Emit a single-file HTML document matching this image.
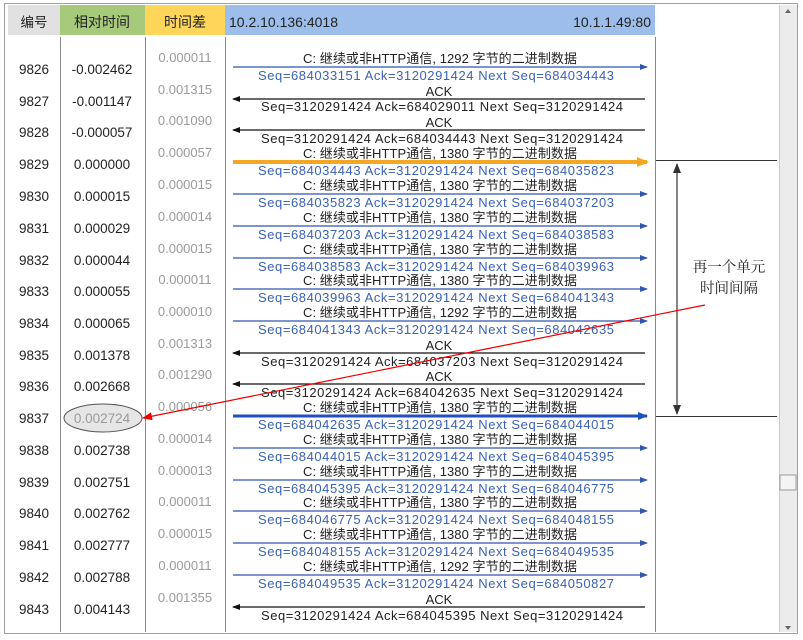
<!DOCTYPE html>
<html><head><meta charset="utf-8"><style>
html,body{margin:0;padding:0;background:#fff;width:803px;height:640px;overflow:hidden}
svg{display:block;font-family:"Liberation Sans","Noto Sans CJK SC",sans-serif}
.n{font-size:13.5px;fill:#222;text-anchor:middle}
.d{font-size:13px;fill:#9a9a9a;text-anchor:middle}
.l{font-size:13px;fill:#222;text-anchor:middle}
.b{font-size:13px;fill:#3a62b8;text-anchor:middle}
.k{font-size:13px;fill:#222;text-anchor:middle}
</style></head><body>
<svg width="803" height="640" viewBox="0 0 803 640">
<defs>
<marker id="ar" markerWidth="8" markerHeight="6" refX="7" refY="3" orient="auto" markerUnits="userSpaceOnUse"><path d="M0,0L8,3L0,6z" fill="#2f56b0"/></marker>
<marker id="al" markerWidth="8" markerHeight="6" refX="7" refY="3" orient="auto" markerUnits="userSpaceOnUse"><path d="M0,0L8,3L0,6z" fill="#111"/></marker>
<marker id="ao" markerWidth="12" markerHeight="10" refX="10" refY="5" orient="auto" markerUnits="userSpaceOnUse"><path d="M0,0L12,5L0,10z" fill="#f5a623"/></marker>
<marker id="ab" markerWidth="10" markerHeight="8" refX="9" refY="4" orient="auto" markerUnits="userSpaceOnUse"><path d="M0,0L10,4L0,8z" fill="#1f4fc0"/></marker>
<marker id="ak" markerWidth="10" markerHeight="8" refX="9" refY="4" orient="auto" markerUnits="userSpaceOnUse"><path d="M0,0L10,4L0,8z" fill="#333"/></marker>
<marker id="ared" markerWidth="10" markerHeight="8" refX="9" refY="4" orient="auto" markerUnits="userSpaceOnUse"><path d="M0,0L10,4L0,8z" fill="#e00"/></marker>
</defs>
<rect x="4.5" y="3.5" width="793" height="630" fill="#fff" stroke="#a0a0a0"/>
<rect x="8" y="5" width="52" height="30" fill="#e1e1e1"/>
<rect x="60" y="5" width="85" height="30" fill="#a6c97b"/>
<rect x="145" y="5" width="80" height="30" fill="#ffd65a"/>
<rect x="225" y="5" width="430" height="30" fill="#9dbeea"/>
<text x="34" y="27" class="n" font-size="14">编号</text>
<text x="102" y="27" class="n" style="font-size:14px">相对时间</text>
<text x="185" y="27" class="n" style="font-size:14px">时间差</text>
<text x="229" y="27" font-size="14" fill="#222">10.2.10.136:4018</text>
<text x="651" y="27" font-size="14" fill="#222" text-anchor="end">10.1.1.49:80</text>
<g stroke="#888" stroke-width="1">
<line x1="60.5" y1="37" x2="60.5" y2="632"/>
<line x1="145.5" y1="37" x2="145.5" y2="632"/>
<line x1="225.5" y1="37" x2="225.5" y2="632"/>
<line x1="655.5" y1="37" x2="655.5" y2="632"/>
</g>
<rect x="779" y="5" width="18" height="627" fill="#ececec"/>
<line x1="779.5" y1="5" x2="779.5" y2="632" stroke="#ccc"/>
<path d="M785,13L788,9L791,13z" fill="#666"/>
<rect x="780" y="475" width="16" height="15" fill="#f4f4f4" stroke="#9a9a9a"/>
<path d="M785,626L788,630L791,626z" fill="#666"/>

<g class="n">
<text x="34" y="74">9826</text><text x="102" y="74">-0.002462</text>
<text x="34" y="106">9827</text><text x="102" y="106">-0.001147</text>
<text x="34" y="137">9828</text><text x="102" y="137">-0.000057</text>
<text x="34" y="169">9829</text><text x="102" y="169">0.000000</text>
<text x="34" y="201">9830</text><text x="102" y="201">0.000015</text>
<text x="34" y="233">9831</text><text x="102" y="233">0.000029</text>
<text x="34" y="265">9832</text><text x="102" y="265">0.000044</text>
<text x="34" y="296">9833</text><text x="102" y="296">0.000055</text>
<text x="34" y="328">9834</text><text x="102" y="328">0.000065</text>
<text x="34" y="360">9835</text><text x="102" y="360">0.001378</text>
<text x="34" y="391">9836</text><text x="102" y="391">0.002668</text>
<text x="34" y="423">9837</text>
<text x="34" y="455">9838</text><text x="102" y="455">0.002738</text>
<text x="34" y="487">9839</text><text x="102" y="487">0.002751</text>
<text x="34" y="518">9840</text><text x="102" y="518">0.002762</text>
<text x="34" y="550">9841</text><text x="102" y="550">0.002777</text>
<text x="34" y="582">9842</text><text x="102" y="582">0.002788</text>
<text x="34" y="614">9843</text><text x="102" y="614">0.004143</text>
</g>
<ellipse cx="103" cy="418" rx="39" ry="14" fill="#e6e6e6" stroke="#555"/>
<text x="102" y="423" class="d" style="font-size:13.5px">0.002724</text>
<g class="d">
<text x="185" y="62">0.000011</text>
<text x="185" y="94">0.001315</text>
<text x="185" y="125">0.001090</text>
<text x="185" y="157">0.000057</text>
<text x="185" y="189">0.000015</text>
<text x="185" y="221">0.000014</text>
<text x="185" y="253">0.000015</text>
<text x="185" y="284">0.000011</text>
<text x="185" y="316">0.000010</text>
<text x="185" y="348">0.001313</text>
<text x="185" y="379">0.001290</text>
<text x="185" y="411">0.000056</text>
<text x="185" y="443">0.000014</text>
<text x="185" y="475">0.000013</text>
<text x="185" y="506">0.000011</text>
<text x="185" y="538">0.000015</text>
<text x="185" y="570">0.000011</text>
<text x="185" y="602">0.001355</text>
</g>

<g stroke-width="1.2" fill="none">
<line x1="233" y1="67" x2="647" y2="67" stroke="#2f56b0" marker-end="url(#ar)"/>
<line x1="645" y1="99" x2="233" y2="99" stroke="#111" marker-end="url(#al)"/>
<line x1="645" y1="130" x2="233" y2="130" stroke="#111" marker-end="url(#al)"/>
<line x1="233" y1="162" x2="647" y2="162" stroke="#f5a623" stroke-width="4" marker-end="url(#ao)"/>
<line x1="233" y1="194" x2="647" y2="194" stroke="#2f56b0" marker-end="url(#ar)"/>
<line x1="233" y1="226" x2="647" y2="226" stroke="#2f56b0" marker-end="url(#ar)"/>
<line x1="233" y1="258" x2="647" y2="258" stroke="#2f56b0" marker-end="url(#ar)"/>
<line x1="233" y1="289" x2="647" y2="289" stroke="#2f56b0" marker-end="url(#ar)"/>
<line x1="233" y1="321" x2="647" y2="321" stroke="#2f56b0" marker-end="url(#ar)"/>
<line x1="645" y1="353" x2="233" y2="353" stroke="#111" marker-end="url(#al)"/>
<line x1="645" y1="384" x2="233" y2="384" stroke="#111" marker-end="url(#al)"/>
<line x1="233" y1="416" x2="647" y2="416" stroke="#1f4fc0" stroke-width="3" marker-end="url(#ab)"/>
<line x1="233" y1="448" x2="647" y2="448" stroke="#2f56b0" marker-end="url(#ar)"/>
<line x1="233" y1="480" x2="647" y2="480" stroke="#2f56b0" marker-end="url(#ar)"/>
<line x1="233" y1="511" x2="647" y2="511" stroke="#2f56b0" marker-end="url(#ar)"/>
<line x1="233" y1="543" x2="647" y2="543" stroke="#2f56b0" marker-end="url(#ar)"/>
<line x1="233" y1="575" x2="647" y2="575" stroke="#2f56b0" marker-end="url(#ar)"/>
<line x1="645" y1="607" x2="233" y2="607" stroke="#111" marker-end="url(#al)"/>
</g>

<g class="l">
<text x="440" y="63" textLength="274">C: 继续或非HTTP通信, 1292 字节的二进制数据</text>
<text x="440" y="158" textLength="274">C: 继续或非HTTP通信, 1380 字节的二进制数据</text>
<text x="440" y="190" textLength="274">C: 继续或非HTTP通信, 1380 字节的二进制数据</text>
<text x="440" y="222" textLength="274">C: 继续或非HTTP通信, 1380 字节的二进制数据</text>
<text x="440" y="254" textLength="274">C: 继续或非HTTP通信, 1380 字节的二进制数据</text>
<text x="440" y="285" textLength="274">C: 继续或非HTTP通信, 1380 字节的二进制数据</text>
<text x="440" y="317" textLength="274">C: 继续或非HTTP通信, 1292 字节的二进制数据</text>
<text x="440" y="412" textLength="274">C: 继续或非HTTP通信, 1380 字节的二进制数据</text>
<text x="440" y="444" textLength="274">C: 继续或非HTTP通信, 1380 字节的二进制数据</text>
<text x="440" y="476" textLength="274">C: 继续或非HTTP通信, 1380 字节的二进制数据</text>
<text x="440" y="507" textLength="274">C: 继续或非HTTP通信, 1380 字节的二进制数据</text>
<text x="440" y="539" textLength="274">C: 继续或非HTTP通信, 1380 字节的二进制数据</text>
<text x="440" y="571" textLength="274">C: 继续或非HTTP通信, 1292 字节的二进制数据</text>
<text x="439" y="96">ACK</text>
<text x="439" y="127">ACK</text>
<text x="439" y="350">ACK</text>
<text x="439" y="381">ACK</text>
<text x="439" y="604">ACK</text>
</g>
<g class="b">
<text x="436" y="80" textLength="356">Seq=684033151  Ack=3120291424  Next Seq=684034443</text>
<text x="436" y="175" textLength="356">Seq=684034443  Ack=3120291424  Next Seq=684035823</text>
<text x="436" y="207" textLength="356">Seq=684035823  Ack=3120291424  Next Seq=684037203</text>
<text x="436" y="239" textLength="356">Seq=684037203  Ack=3120291424  Next Seq=684038583</text>
<text x="436" y="271" textLength="356">Seq=684038583  Ack=3120291424  Next Seq=684039963</text>
<text x="436" y="302" textLength="356">Seq=684039963  Ack=3120291424  Next Seq=684041343</text>
<text x="436" y="334" textLength="356">Seq=684041343  Ack=3120291424  Next Seq=684042635</text>
<text x="436" y="429" textLength="356">Seq=684042635  Ack=3120291424  Next Seq=684044015</text>
<text x="436" y="461" textLength="356">Seq=684044015  Ack=3120291424  Next Seq=684045395</text>
<text x="436" y="493" textLength="356">Seq=684045395  Ack=3120291424  Next Seq=684046775</text>
<text x="436" y="524" textLength="356">Seq=684046775  Ack=3120291424  Next Seq=684048155</text>
<text x="436" y="556" textLength="356">Seq=684048155  Ack=3120291424  Next Seq=684049535</text>
<text x="436" y="588" textLength="356">Seq=684049535  Ack=3120291424  Next Seq=684050827</text>
</g>
<g class="k">
<text x="442" y="111" textLength="362">Seq=3120291424  Ack=684029011  Next Seq=3120291424</text>
<text x="442" y="143" textLength="362">Seq=3120291424  Ack=684034443  Next Seq=3120291424</text>
<text x="442" y="366" textLength="362">Seq=3120291424  Ack=684037203  Next Seq=3120291424</text>
<text x="442" y="397" textLength="362">Seq=3120291424  Ack=684042635  Next Seq=3120291424</text>
<text x="442" y="620" textLength="362">Seq=3120291424  Ack=684045395  Next Seq=3120291424</text>
</g>

<line x1="656" y1="160.5" x2="777" y2="160.5" stroke="#333"/>
<line x1="656" y1="416.5" x2="777" y2="416.5" stroke="#333"/>
<line x1="677" y1="300" x2="677" y2="164" stroke="#333" stroke-width="1.2" marker-end="url(#ak)"/>
<line x1="677" y1="300" x2="677" y2="414" stroke="#333" stroke-width="1.2" marker-end="url(#ak)"/>
<text x="729" y="272" font-size="14.5" fill="#222" text-anchor="middle" style="font-family:'Noto Serif CJK SC',serif">再一个单元</text>
<text x="729" y="293" font-size="14.5" fill="#222" text-anchor="middle" style="font-family:'Noto Serif CJK SC',serif">时间间隔</text>
<line x1="705" y1="305" x2="143" y2="418" stroke="#e00" stroke-width="1.2" marker-end="url(#ared)"/>
</svg>
</body></html>
